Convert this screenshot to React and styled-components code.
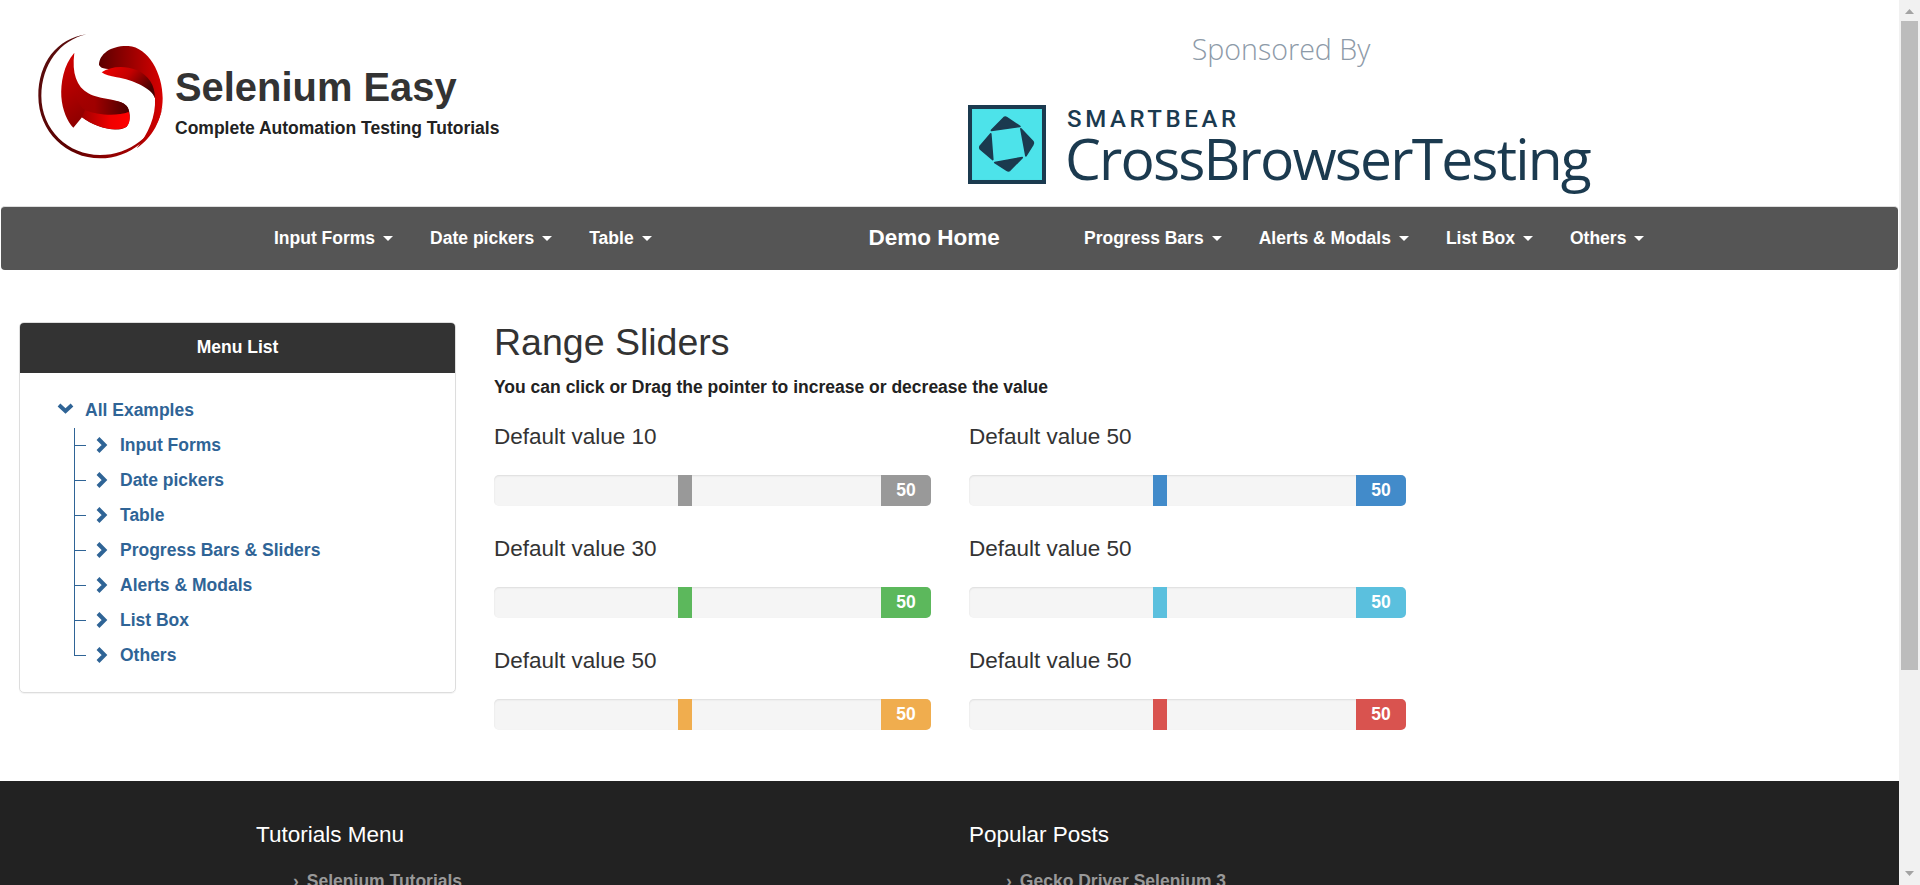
import styled, { createGlobalStyle } from "styled-components";

const GlobalStyle = createGlobalStyle`
  html, body {
    margin: 0;
    height: 100%;
    overflow: hidden;
    background: #fff;
    font-family: "Liberation Sans", Arial, sans-serif;
    font-size: 17.5px;
    color: #333;
  }
  * { box-sizing: border-box; }
`;

const Shell = styled.div`
  display: flex;
  height: 885px;
`;

const Page = styled.div`
  flex: 1;
  min-width: 0;
  overflow: hidden;
`;

const ScrollTrack = styled.div`
  width: 21px;
  background: #f1f1f1;
  display: flex;
  flex-direction: column;
  align-items: center;
  padding-top: 9px;
`;

const ScrollThumb = styled.div`
  width: 17px;
  height: 649px;
  margin-top: 7px;
  background: #bcbcbc;
`;

const ScrollArrow = styled.svg`
  display: block;
  width: 9px;
  height: 5px;
  fill: #a3a3a3;
`;

const BottomArrow = styled(ScrollArrow)`
  margin-top: auto;
  margin-bottom: 9px;
  transform: rotate(180deg);
`;

const Header = styled.header`
  height: 206px;
  display: flex;
`;

const Brand = styled.div`
  width: 968px;
  padding: 20px 0 0 20px;
  display: flex;
  align-items: flex-start;
`;

const BrandLogo = styled.svg`
  width: 160px;
  height: 150px;
  flex: none;
`;

const BrandText = styled.div`
  margin-left: -5px;
  padding-top: 42px;
`;

const BrandName = styled.div`
  font-size: 39.9px;
  line-height: 50px;
  font-weight: 700;
  color: #333;
`;

const BrandTag = styled.div`
  margin-top: 4px;
  font-size: 17.5px;
  line-height: 24px;
  font-weight: 700;
  color: #222;
`;

const Sponsor = styled.div`
  width: 640px;
  padding-top: 28px;
`;

const SponsorTitle = styled.div`
  width: 626px;
  text-align: center;
  font-family: "Open Sans", sans-serif;
  font-weight: 300;
  font-size: 28.6px;
  line-height: 42px;
  color: #8d9aa8;
`;

const SponsorLogo = styled.div`
  display: flex;
  margin-top: 35px;
`;

const SponsorMark = styled.svg`
  width: 78px;
  height: 79px;
  flex: none;
`;

const SponsorWords = styled.div`
  margin-left: 21px;
  color: #1b3a4f;
`;

const SponsorCompany = styled.div`
  font-family: "Roboto", sans-serif;
  font-weight: 500;
  font-size: 24px;
  line-height: 22px;
  margin-top: 3px;
  letter-spacing: 3.6px;
`;

const SponsorProduct = styled.div`
  font-family: "Open Sans", sans-serif;
  font-size: 57px;
  line-height: 56px;
  letter-spacing: -1.85px;
  margin-left: -2px;
`;

const Navbar = styled.nav`
  height: 64px;
  margin: 0 1px;
  background: #555;
  border-top: 1px solid #ddd;
  border-radius: 4px;
  display: flex;
  align-items: center;
  padding: 0 0 2px 254.5px;
`;

const NavGroup = styled.div`
  display: flex;
  width: ${(p) => p.$width}px;
`;

const NavItem = styled.a`
  display: flex;
  align-items: center;
  padding: 0 18.5px;
  color: #fff;
  font-weight: 700;
  font-size: 17.5px;
  line-height: 24px;
`;

const Caret = styled.span`
  width: 0;
  height: 0;
  margin: 2px 0 0 8px;
  border-top: 5px solid #fff;
  border-left: 5px solid transparent;
  border-right: 5px solid transparent;
`;

const NavHome = styled.a`
  color: #fff;
  font-weight: 700;
  font-size: 22.5px;
  line-height: 28px;
`;

const Main = styled.main`
  display: flex;
  align-items: flex-start;
  padding: 52px 0 0 19px;
  height: 511px;
`;

const Panel = styled.aside`
  width: 437px;
  height: 371px;
  flex: none;
  border: 1px solid #ddd;
  border-radius: 5px;
  box-shadow: 0 1px 1px rgba(0, 0, 0, 0.05);
  overflow: hidden;
`;

const PanelHead = styled.div`
  height: 50px;
  background: #333;
  color: #fff;
  font-weight: 700;
  text-align: center;
  line-height: 48px;
`;

const Tree = styled.div`
  padding: 20px 0 0 37px;
`;

const TreeRoot = styled.div`
  display: flex;
  align-items: center;
  height: 35px;
  color: #2f6496;
  font-weight: 700;
`;

const ChevronDown = styled.svg`
  width: 17px;
  height: 11px;
  margin: -4px 11px 0 0;
  flex: none;
`;

const TreeList = styled.ul`
  list-style: none;
  margin: 0 0 0 17px;
  padding: 0;
`;

const TreeItem = styled.li`
  position: relative;
  display: flex;
  align-items: center;
  height: 35px;
  padding-left: 21px;
  color: #2f6496;
  font-weight: 700;

  &::before {
    content: "";
    position: absolute;
    left: 0;
    top: 0;
    bottom: ${(p) => (p.$last ? "17px" : "0")};
    border-left: 1px solid #2f6496;
  }
  &::after {
    content: "";
    position: absolute;
    left: 0;
    top: 17px;
    width: 12px;
    border-top: 1px solid #2f6496;
  }
`;

const ChevronRight = styled.svg`
  width: 13px;
  height: 16px;
  margin-right: 12px;
  margin-top: -2px;
  flex: none;
`;

const Content = styled.section`
  margin-left: 38px;
`;

const Title = styled.h2`
  margin: -1px 0 0;
  font-size: 37.5px;
  font-weight: 400;
  line-height: 42px;
  color: #333;
`;

const Lead = styled.p`
  margin: 12px 0 0;
  font-weight: 700;
  line-height: 24px;
  color: #222;
`;

const SliderGrid = styled.div`
  display: grid;
  grid-template-columns: 437px 437px;
  column-gap: 38px;
  row-gap: 29px;
  margin-top: 24px;
`;

const SliderLabel = styled.div`
  font-size: 22.5px;
  line-height: 28px;
  margin-bottom: 24px;
`;

const Track = styled.div`
  position: relative;
  display: flex;
  height: 31px;
  background: #f5f5f5;
  border-radius: 5px;
  box-shadow: inset 0 1px 2px rgba(0, 0, 0, 0.1);
  overflow: hidden;
`;

const Thumb = styled.div`
  position: absolute;
  left: 184px;
  top: 0;
  bottom: 0;
  width: 14px;
  background: ${(p) => p.$color};
`;

const Output = styled.div`
  margin-left: auto;
  width: 50px;
  background: ${(p) => p.$color};
  color: #fff;
  font-weight: 700;
  text-align: center;
  line-height: 31px;
`;

const Footer = styled.footer`
  height: 200px;
  background: #222;
  display: flex;
  padding: 37px 0 0 256px;
`;

const FooterCol = styled.div`
  width: 713px;
`;

const FooterTitle = styled.div`
  font-size: 22.5px;
  line-height: 34px;
  color: #fff;
`;

const FooterLink = styled.div`
  margin: 17px 0 0 37px;
  line-height: 24px;
  font-weight: 700;
  color: #999;

  &::before {
    content: "›";
    margin-right: 8px;
  }
`;

const sliders = [
  { label: "Default value 10", color: "#999" },
  { label: "Default value 50", color: "#428bca" },
  { label: "Default value 30", color: "#5cb85c" },
  { label: "Default value 50", color: "#5bc0de" },
  { label: "Default value 50", color: "#f0ad4e" },
  { label: "Default value 50", color: "#d9534f" },
];

const menuItems = [
  "Input Forms",
  "Date pickers",
  "Table",
  "Progress Bars & Sliders",
  "Alerts & Modals",
  "List Box",
  "Others",
];

function SeleniumLogo() {
  return (
    <BrandLogo viewBox="0 0 480 450">
      <defs>
        <linearGradient id="ring" x1="0" y1="0" x2="1" y2="1">
          <stop offset="0" stopColor="#5a1010" />
          <stop offset="0.6" stopColor="#5c0000" />
          <stop offset="1" stopColor="#d00000" />
        </linearGradient>
        <linearGradient id="lobe" x1="0" y1="0" x2="1" y2="0">
          <stop offset="0" stopColor="#5c0000" />
          <stop offset="1" stopColor="#d80000" />
        </linearGradient>
        <linearGradient id="band" x1="0" y1="0" x2="1" y2="0.5">
          <stop offset="0" stopColor="#f00000" />
          <stop offset="0.5" stopColor="#c40000" />
          <stop offset="1" stopColor="#4a0000" />
        </linearGradient>
        <linearGradient id="left" x1="0" y1="0" x2="0.6" y2="1">
          <stop offset="0" stopColor="#d80000" />
          <stop offset="1" stopColor="#7a0000" />
        </linearGradient>
        <linearGradient id="mid" x1="0" y1="0" x2="1" y2="0">
          <stop offset="0" stopColor="#b00000" stopOpacity="0" />
          <stop offset="0.4" stopColor="#a00000" />
          <stop offset="1" stopColor="#4a0000" />
        </linearGradient>
        <linearGradient id="low" x1="0" y1="0" x2="1" y2="0">
          <stop offset="0" stopColor="#a00000" />
          <stop offset="0.6" stopColor="#f00000" />
          <stop offset="1" stopColor="#ff0000" />
        </linearGradient>
      </defs>
      <path
        d="M200 43C110 55 55 130 55 228C55 335 140 415 240 415C330 415 410 350 428 260C405 345 330 405 240 405C145 405 64 330 64 228C64 135 120 60 200 43Z"
        fill="url(#ring)"
      />
      <path
        d="M237 135C238 100 275 76 325 78C385 82 428 160 428 235C428 300 395 355 350 385C385 340 408 290 405 235C395 195 340 165 290 150C265 145 245 150 237 135Z"
        fill="url(#lobe)"
      />
      <path
        d="M245 157C270 140 310 135 350 150C385 165 405 195 405 235C395 205 340 180 290 172C270 168 255 165 245 157Z"
        fill="url(#band)"
      />
      <path
        d="M163 98C130 135 122 190 124 230C127 270 142 305 160 323L186 292C225 322 290 340 320 320C335 300 330 270 320 258C300 236 240 240 205 220C170 200 155 160 163 98Z"
        fill="url(#left)"
      />
      <path
        d="M156 185C170 210 190 225 215 232C255 243 300 236 320 258C326 266 327 272 326 276C290 290 230 285 195 270C175 255 160 220 156 185Z"
        fill="url(#mid)"
      />
      <path
        d="M195 270C230 285 290 290 326 276C332 298 328 312 320 320C285 338 225 322 186 292Z"
        fill="url(#low)"
      />
    </BrandLogo>
  );
}

function SmartbearMark() {
  return (
    <SponsorMark viewBox="25 32 233 236">
      <rect x="31" y="38" width="221" height="224" fill="#4de3ea" stroke="#1b3a4f" strokeWidth="12" />
      <g fill="#1b3a4f" stroke="#1b3a4f" strokeWidth="5" strokeLinejoin="round">
        <path d="M95 108L132 70Q136 67 141 70L180 96Z" />
        <path d="M183 103L219 141Q222 146 219 150L198 184Z" />
        <path d="M187 189L150 227Q146 230 141 227L105 204Z" />
        <path d="M93 118L61 155Q59 160 62 164L99 195Z" />
      </g>
    </SponsorMark>
  );
}

function App() {
  return (
    <>
      <GlobalStyle />
      <Shell>
        <Page>
          <Header>
            <Brand>
              <SeleniumLogo />
              <BrandText>
                <BrandName>Selenium Easy</BrandName>
                <BrandTag>Complete Automation Testing Tutorials</BrandTag>
              </BrandText>
            </Brand>
            <Sponsor>
              <SponsorTitle>Sponsored By</SponsorTitle>
              <SponsorLogo>
                <SmartbearMark />
                <SponsorWords>
                  <SponsorCompany>SMARTBEAR</SponsorCompany>
                  <SponsorProduct>CrossBrowserTesting</SponsorProduct>
                </SponsorWords>
              </SponsorLogo>
            </Sponsor>
          </Header>

          <Navbar>
            <NavGroup $width={613}>
              <NavItem>Input Forms<Caret /></NavItem>
              <NavItem>Date pickers<Caret /></NavItem>
              <NavItem>Table<Caret /></NavItem>
            </NavGroup>
            <NavGroup $width={197}>
              <NavHome>Demo Home</NavHome>
            </NavGroup>
            <NavGroup $width={640}>
              <NavItem>Progress Bars<Caret /></NavItem>
              <NavItem>Alerts &amp; Modals<Caret /></NavItem>
              <NavItem>List Box<Caret /></NavItem>
              <NavItem>Others<Caret /></NavItem>
            </NavGroup>
          </Navbar>

          <Main>
            <Panel>
              <PanelHead>Menu List</PanelHead>
              <Tree>
                <TreeRoot>
                  <ChevronDown viewBox="0 0 17 11">
                    <path d="M2 2L8.5 8L15 2" fill="none" stroke="#2f6496" strokeWidth="4" />
                  </ChevronDown>
                  All Examples
                </TreeRoot>
                <TreeList>
                  {menuItems.map((item, i) => (
                    <TreeItem key={item} $last={i === menuItems.length - 1}>
                      <ChevronRight viewBox="0 0 13 16">
                        <path d="M3 1.5L9.5 8L3 14.5" fill="none" stroke="#2f6496" strokeWidth="4" />
                      </ChevronRight>
                      {item}
                    </TreeItem>
                  ))}
                </TreeList>
              </Tree>
            </Panel>

            <Content>
              <Title>Range Sliders</Title>
              <Lead>You can click or Drag the pointer to increase or decrease the value</Lead>
              <SliderGrid>
                {sliders.map((s, i) => (
                  <div key={i}>
                    <SliderLabel>{s.label}</SliderLabel>
                    <Track>
                      <Thumb $color={s.color} />
                      <Output $color={s.color}>50</Output>
                    </Track>
                  </div>
                ))}
              </SliderGrid>
            </Content>
          </Main>

          <Footer>
            <FooterCol>
              <FooterTitle>Tutorials Menu</FooterTitle>
              <FooterLink>Selenium Tutorials</FooterLink>
            </FooterCol>
            <FooterCol>
              <FooterTitle>Popular Posts</FooterTitle>
              <FooterLink>Gecko Driver Selenium 3</FooterLink>
            </FooterCol>
          </Footer>
        </Page>
        <ScrollTrack>
          <ScrollArrow viewBox="0 0 9 5"><path d="M4.5 0L9 5H0Z" /></ScrollArrow>
          <ScrollThumb />
          <BottomArrow viewBox="0 0 9 5"><path d="M4.5 0L9 5H0Z" /></BottomArrow>
        </ScrollTrack>
      </Shell>
    </>
  );
}

export default App;
